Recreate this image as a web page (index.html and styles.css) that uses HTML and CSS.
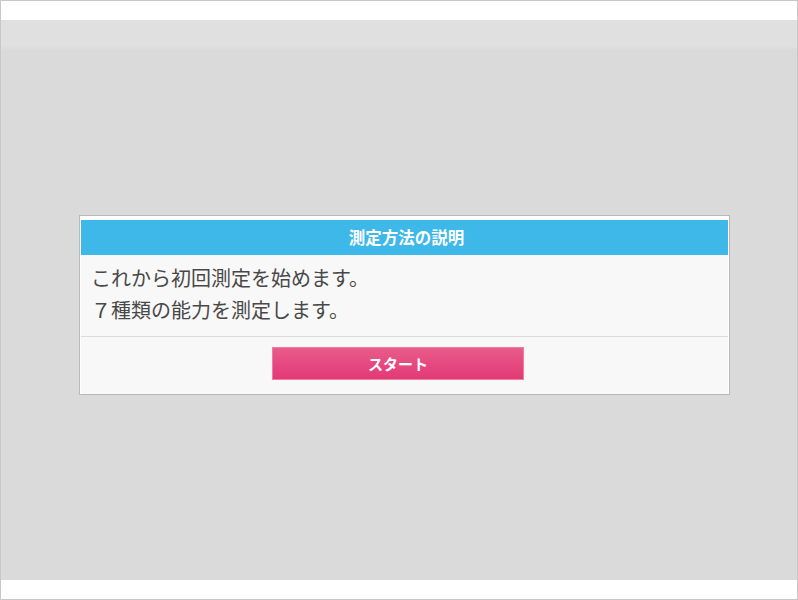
FILE: index.html
```html
<!DOCTYPE html>
<html lang="ja">
<head>
<meta charset="utf-8">
<link rel="stylesheet" href="styles.css">
</head>
<body>
<div class="frame">
  <div class="top"></div>
  <div class="stage">
    <div class="dialog">
      <div class="dialog-head">測定方法の説明</div>
      <div class="dialog-body">
        <p>これから初回測定を始めます。</p>
        <p>７種類の能力を測定します。</p>
      </div>
      <div class="dialog-foot">
        <button class="start">スタート</button>
      </div>
    </div>
  </div>
  <div class="bottom"></div>
</div>
</body>
</html>
```
FILE: styles.css
```css
* { box-sizing: border-box; }
html, body { margin: 0; padding: 0; background: #fff; }
body { font-family: "Noto Sans CJK JP", "Noto Sans", sans-serif; }
.frame {
  width: 798px;
  height: 600px;
  border: 1px solid #c8c8c8;
  display: flex;
  flex-direction: column;
}
.top { height: 19px; background: #fff; }
.stage {
  height: 560px;
  background: linear-gradient(#e0e0e0 0, #e0e0e0 26px, #dadada 30px, #dadada 100%);
  padding: 195px 0 0 78px;
}
.bottom { flex: 1; background: #fff; }
.dialog {
  width: 651px;
  height: 180px;
  border: 1px solid #b9b9b9;
  background: #fff;
  padding: 4px 1px 0 1px;
  display: flex;
  flex-direction: column;
}
.dialog-head {
  height: 35px;
  background: #3db8e8;
  color: #fff;
  font-weight: bold;
  font-size: 16.5px;
  text-align: center;
  line-height: 35px;
  padding-left: 4px;
}
.dialog-body {
  background: #f8f8f8;
  padding: 7px 0 0 10px;
  border-bottom: 1px solid #dcdcdc;
  height: 82px;
}
.dialog-body p {
  margin: 0;
  font-size: 20px;
  line-height: 32px;
  color: #484848;
}
.dialog-foot {
  flex: 1;
  background: #f8f8f8;
  padding: 10px 0 0 191px;
}
.start {
  display: block;
  width: 252px;
  height: 33px;
  border: 1px solid #f07ba3;
  background: linear-gradient(#e95b8b, #e23a74);
  color: #fff;
  font-family: "Noto Sans CJK JP", sans-serif;
  font-weight: bold;
  font-size: 15px;
  padding: 0;
  border-radius: 0;
}
```
